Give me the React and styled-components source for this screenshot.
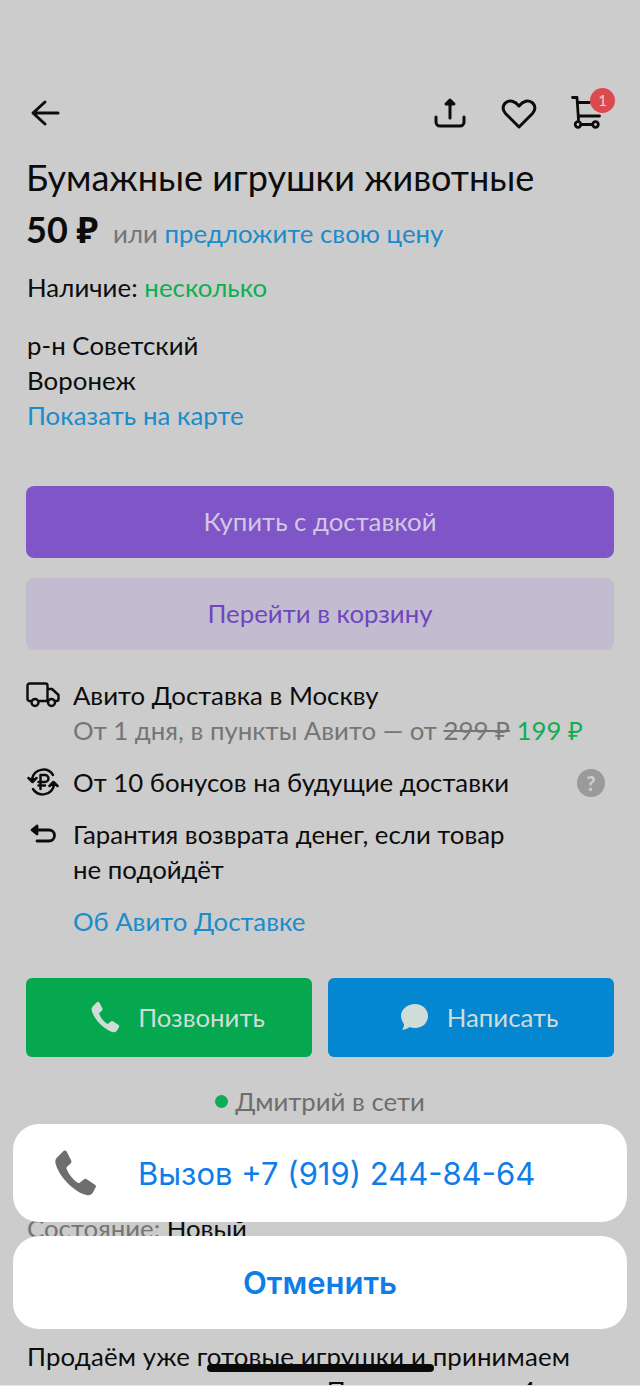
import styled, { createGlobalStyle } from "styled-components";

const GlobalStyle = createGlobalStyle`
  html, body {
    margin: 0;
    padding: 0;
    background: #cccccc;
  }
  body {
    font-family: "Lato", "Noto Sans", sans-serif;
    color: #0c0c0c;
  }
`;

const Page = styled.div`
  position: relative;
  box-sizing: border-box;
  width: 640px;
  height: 1386px;
  overflow: hidden;
  background: #cccccc;
  border-bottom: 1px solid #e2e2e2;
`;

const Content = styled.div`
  display: flex;
  flex-direction: column;
  padding: 92px 26px 0 26px;
`;

const TopBar = styled.div`
  display: flex;
  align-items: center;
  justify-content: space-between;
  height: 42px;
`;

const TopActions = styled.div`
  display: flex;
  align-items: center;
  gap: 34px;
  padding-right: 9px;
`;

const IconWrap = styled.div`
  position: relative;
  display: flex;
  width: ${(p) => p.$w || 34}px;
  height: ${(p) => p.$h || 34}px;
`;

const Badge = styled.span`
  position: absolute;
  top: -8px;
  right: -10px;
  width: 25px;
  height: 25px;
  border-radius: 50%;
  background: #dc4a50;
  color: #e8d0d0;
  font-size: 15px;
  line-height: 25px;
  text-align: center;
`;

const Title = styled.h1`
  margin: 21px 0 0;
  font-size: 36px;
  line-height: 44px;
  font-weight: 400;
`;

const PriceRow = styled.div`
  display: flex;
  align-items: baseline;
  margin-top: 6px;
  height: 40px;
  font-size: 25.8px;
`;

const Price = styled.span`
  font-size: 36px;
  font-weight: 700;
  margin-right: 15px;
`;

const Muted = styled.span`
  color: #757575;
`;

const Link = styled.span`
  color: #1a8bcb;
`;

const Paragraph = styled.div`
  padding-left: 1px;
  font-size: 25.8px;
  line-height: 35px;
  letter-spacing: 0.05px;
  margin-top: ${(p) => p.$top || 0}px;
`;

const Green = styled.span`
  color: #0fae55;
`;

const Button = styled.div`
  display: flex;
  align-items: center;
  justify-content: center;
  box-sizing: border-box;
  height: 72px;
  padding-bottom: 3px;
  border-radius: 8px;
  font-size: 25.8px;
  background: ${(p) => p.$bg};
  color: ${(p) => p.$color};
  margin-top: ${(p) => p.$top}px;
`;

const InfoList = styled.div`
  display: flex;
  flex-direction: column;
  margin-top: 28px;
`;

const InfoRow = styled.div`
  display: grid;
  grid-template-columns: 47px 1fr auto;
  font-size: 25.8px;
  line-height: 35px;
  white-space: nowrap;
  margin-bottom: ${(p) => p.$gap || 0}px;
`;

const InfoIcon = styled.div`
  display: flex;
  justify-content: center;
  width: 34px;
  padding-top: ${(p) => p.$top || 0}px;
`;

const Struck = styled.span`
  text-decoration: line-through;
`;

const HelpDot = styled.div`
  display: flex;
  align-items: center;
  justify-content: center;
  width: 28px;
  height: 28px;
  margin-top: 4px;
  margin-right: 9px;
  border-radius: 50%;
  background: #9a9a9a;
  color: #cccccc;
  font-size: 20px;
  font-weight: 900;
`;

const ContactRow = styled.div`
  display: grid;
  grid-template-columns: 1fr 1fr;
  gap: 16px;
  margin-top: 39px;
`;

const ContactButton = styled.div`
  display: flex;
  align-items: center;
  justify-content: center;
  box-sizing: border-box;
  gap: ${(p) => p.$gap}px;
  height: 79px;
  padding: 0 0 2px 15px;
  border-radius: 6px;
  font-size: 25.8px;
  background: ${(p) => p.$bg};
  color: #cfdcd8;
`;

const Online = styled.div`
  display: flex;
  align-items: center;
  justify-content: center;
  gap: 7px;
  margin-top: 27px;
  font-size: 25.8px;
  line-height: 35px;
  color: #6e6e6e;
`;

const OnlineDot = styled.span`
  width: 13px;
  height: 13px;
  border-radius: 50%;
  background: #0fae55;
`;

const Condition = styled.div`
  margin-top: 92px;
  padding-left: 1px;
  font-size: 25.8px;
  line-height: 35px;
`;

const Description = styled.div`
  margin-top: 93px;
  padding-left: 1px;
  font-size: 25.8px;
  line-height: 34px;
  letter-spacing: 0.15px;
  white-space: nowrap;
`;

const Sheet = styled.div`
  position: absolute;
  left: 13px;
  right: 13px;
  top: 1124px;
  display: flex;
  flex-direction: column;
  gap: 14px;
  font-family: "Inter", "Roboto", sans-serif;
`;

const SheetCard = styled.div`
  display: flex;
  align-items: center;
  justify-content: ${(p) => (p.$center ? "center" : "flex-start")};
  height: ${(p) => p.$h}px;
  border-radius: 26px;
  background: #ffffff;
  color: #0f7de8;
  font-size: 31px;
  font-weight: ${(p) => (p.$center ? 600 : 400)};
  padding-left: ${(p) => (p.$center ? 0 : 37)}px;
`;

const CallLabel = styled.span`
  margin-left: 38px;
`;

const HomeIndicator = styled.div`
  position: absolute;
  left: 207px;
  top: 1364px;
  width: 227px;
  height: 8px;
  border-radius: 4px;
  background: #0a0a0a;
`;

const BackArrow = () => (
  <svg width="34" height="34" viewBox="0 0 34 34" fill="none" stroke="#0c0c0c" strokeWidth="3" strokeLinecap="round" strokeLinejoin="round">
    <path d="M32 17H8M19 6L7 17l12 11" />
  </svg>
);

const ShareIcon = () => (
  <svg width="34" height="34" viewBox="0 0 34 34" fill="none" stroke="#0c0c0c" strokeWidth="3" strokeLinecap="round" strokeLinejoin="round">
    <path d="M17 22V7" />
    <path d="M13 8l4-4 4 4z" fill="#0c0c0c" />
    <path d="M3 21v5a4 4 0 0 0 4 4h20a4 4 0 0 0 4-4v-5" />
  </svg>
);

const HeartIcon = () => (
  <svg width="36" height="34" viewBox="0 0 36 34" fill="none" stroke="#0c0c0c" strokeWidth="3" strokeLinejoin="round">
    <path d="M18 31L4.500 17.500C1 14 1.500 9 5 6.500c3.600-2.600 8.800-1.700 13 3.500 4.200-5.200 9.400-6.100 13-3.500 3.500 2.500 4 7.500.5 11z" />
  </svg>
);

const CartIcon = () => (
  <svg width="34" height="34" viewBox="0 0 34 34" fill="none" stroke="#0c0c0c" strokeWidth="2.800" strokeLinecap="round" strokeLinejoin="round">
    <path d="M1.500 1.500H6L7.500 24" />
    <path d="M6.500 6.500h12" />
    <path d="M7.500 20h21" />
    <circle cx="7" cy="28.500" r="2.800" />
    <circle cx="24.500" cy="28.500" r="2.800" />
    <path d="M10 28.500h11.500" />
  </svg>
);

const TruckIcon = () => (
  <svg width="34" height="26" viewBox="0 0 34 26" fill="none" stroke="#0c0c0c" strokeWidth="2.400" strokeLinejoin="round">
    <path d="M5 19H3.500a2 2 0 0 1-2-2V3.500a2 2 0 0 1 2-2h16a2 2 0 0 1 2 2V19H13" />
    <path d="M21.500 7h4.500l6.500 6v4a2 2 0 0 1-2 2H29M21.500 19H22" />
    <circle cx="9" cy="20.500" r="3.500" />
    <circle cx="25.500" cy="20.500" r="3.500" />
  </svg>
);

const BonusIcon = () => (
  <svg width="32" height="32" viewBox="0 0 32 32" fill="none" stroke="#0c0c0c" strokeWidth="2.500" strokeLinecap="round" strokeLinejoin="round">
    <path d="M5 13A11.500 11.500 0 0 1 26 9" />
    <path d="M27 19A11.500 11.500 0 0 1 6 23" />
    <path d="M1.500 12l4 4 4-4" fill="#0c0c0c" />
    <path d="M22.500 20l4-4 4 4" fill="#0c0c0c" />
    <path d="M13.500 23V9h4.500a3.500 3.500 0 0 1 0 7h-6.500M11.500 19.500h6.500" />
  </svg>
);

const ReturnIcon = () => (
  <svg width="26" height="22" viewBox="0 0 26 22" fill="none" stroke="#0c0c0c" strokeWidth="2.800" strokeLinecap="round" strokeLinejoin="round">
    <path d="M5 6h14a5 5 0 0 1 0 11H7" />
    <path d="M7 2L2 6l5 4z" fill="#0c0c0c" />
  </svg>
);

const PhoneIcon = ({ size, color }) => (
  <svg width={size} height={size} viewBox="0 0 24 24" fill={color}>
    <path d="M6.600 1.300c.5-.3 1.100-.1 1.400.4l2.200 4.300c.2.500.1 1-.3 1.400L8.200 9c-.3.300-.4.700-.2 1.100.9 2.300 3 5.100 5.300 6.600.4.200.8.200 1.100-.1l1.800-1.500c.4-.3 1-.4 1.400-.1l4 2.600c.5.300.6.900.3 1.400l-1.300 2.400c-.5.900-1.500 1.500-2.600 1.300C11.500 21.500 3.700 13 2.600 7.100c-.2-1.100.2-2.100 1-2.800z" />
  </svg>
);

const ChatIcon = () => (
  <svg width="30" height="28" viewBox="0 0 30 28" fill="#cfdcd8">
    <path d="M16 1c7.500 0 13 5 13 12s-5.500 12-13 12c-2 0-3.800-.3-5.400-1-1.600 1.500-4 2.500-7.600 2.700 1.300-1.600 2-3.300 2-5.400C3 18 2 15.500 2 13 2 6 8.500 1 16 1z" />
  </svg>
);

export default function App() {
  return (
    <Page>
      <GlobalStyle />
      <Content>
        <TopBar>
          <IconWrap>
            <BackArrow />
          </IconWrap>
          <TopActions>
            <IconWrap>
              <ShareIcon />
            </IconWrap>
            <IconWrap $w={36}>
              <HeartIcon />
            </IconWrap>
            <IconWrap>
              <CartIcon />
              <Badge>1</Badge>
            </IconWrap>
          </TopActions>
        </TopBar>
        <Title>Бумажные игрушки животные</Title>
        <PriceRow>
          <Price>50 ₽</Price>
          <Muted>или&nbsp;</Muted>
          <Link>предложите свою цену</Link>
        </PriceRow>
        <Paragraph $top={25}>
          Наличие: <Green>несколько</Green>
        </Paragraph>
        <Paragraph $top={23}>
          р-н Советский
          <br />
          Воронеж
          <br />
          <Link>Показать на карте</Link>
        </Paragraph>
        <Button $top={53} $bg="#7f55c8" $color="#d3c8e2">
          Купить с доставкой
        </Button>
        <Button $top={20} $bg="#c3bcd0" $color="#6f46c0">
          Перейти в корзину
        </Button>
        <InfoList>
          <InfoRow $gap={17}>
            <InfoIcon $top={4}>
              <TruckIcon />
            </InfoIcon>
            <div>
              Авито Доставка в Москву
              <br />
              <Muted>
                От 1 дня, в пункты Авито — от <Struck>299 ₽</Struck> <Green>199 ₽</Green>
              </Muted>
            </div>
          </InfoRow>
          <InfoRow $gap={17}>
            <InfoIcon $top={1}>
              <BonusIcon />
            </InfoIcon>
            <div>От 10 бонусов на будущие доставки</div>
            <HelpDot>?</HelpDot>
          </InfoRow>
          <InfoRow $gap={17}>
            <InfoIcon $top={7}>
              <ReturnIcon />
            </InfoIcon>
            <div>
              Гарантия возврата денег, если товар
              <br />
              не подойдёт
            </div>
          </InfoRow>
          <InfoRow>
            <span />
            <Link>Об Авито Доставке</Link>
          </InfoRow>
        </InfoList>
        <ContactRow>
          <ContactButton $bg="#05a84e" $gap={16}>
            <PhoneIcon size={34} color="#cfdcd8" />
            Позвонить
          </ContactButton>
          <ContactButton $bg="#0586d0" $gap={18}>
            <ChatIcon />
            Написать
          </ContactButton>
        </ContactRow>
        <Online>
          <OnlineDot />
          Дмитрий в сети
        </Online>
        <Condition>
          <Muted>Состояние:</Muted> Новый
        </Condition>
        <Description>
          Продаём уже готовые игрушки и принимаем
          <br />
          заказы на изготовление. Пакет игрушек: 4
        </Description>
      </Content>
      <Sheet>
        <SheetCard $h={98}>
          <PhoneIcon size={50} color="#6e6e6e" />
          <CallLabel>Вызов +7 (919) 244-84-64</CallLabel>
        </SheetCard>
        <SheetCard $h={93} $center>
          Отменить
        </SheetCard>
      </Sheet>
      <HomeIndicator />
    </Page>
  );
}
